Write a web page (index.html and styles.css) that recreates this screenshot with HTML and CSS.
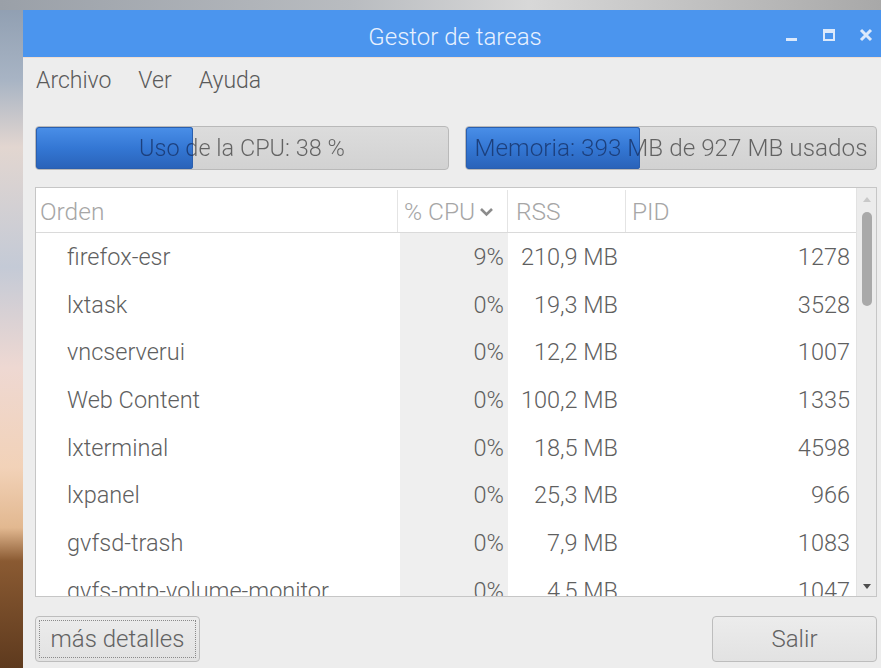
FILE: index.html
```html
<!DOCTYPE html>
<html lang="es">
<head>
<meta charset="utf-8">
<title>Gestor de tareas</title>
<link rel="stylesheet" href="styles.css">
</head>
<body>
<div class="desktop">
  <div class="window">
    <header class="titlebar">
      <span class="title">Gestor de tareas</span>
      <div class="controls">
        <svg class="ctl" width="14" height="14" viewBox="0 0 14 14"><rect x="1" y="10" width="11" height="3" fill="currentColor"/></svg>
        <svg class="ctl" width="14" height="14" viewBox="0 0 14 14"><rect x="2" y="2" width="10" height="10" fill="none" stroke="currentColor" stroke-width="2"/><rect x="2" y="2" width="10" height="3" fill="currentColor"/></svg>
        <svg class="ctl" width="14" height="14" viewBox="0 0 14 14"><path d="M2 2 L12 12 M12 2 L2 12" stroke="currentColor" stroke-width="3"/></svg>
      </div>
    </header>

    <nav class="menubar">
      <span class="menu-item">Archivo</span>
      <span class="menu-item">Ver</span>
      <span class="menu-item">Ayuda</span>
    </nav>

    <div class="meters">
      <div class="meter" style="--p: 38%">
        <div class="meter-fill"></div>
        <span class="meter-label">Uso de la CPU: 38 %</span>
      </div>
      <div class="meter meter-wide" style="--p: 42.4%">
        <div class="meter-fill"></div>
        <span class="meter-label">Memoria: 393 MB de 927 MB usados</span>
      </div>
    </div>

    <div class="proc-list">
      <div class="proc-table">
        <div class="proc-head">
          <div class="hcell">Orden</div>
          <div class="hcell">% CPU
            <svg class="sort" width="15" height="10" viewBox="0 0 15 10"><polyline points="2,2 7.5,7.5 13,2" fill="none" stroke="currentColor" stroke-width="2.6"/></svg>
          </div>
          <div class="hcell">RSS</div>
          <div class="hcell">PID</div>
        </div>
        <div class="proc-body">
          <div class="row"><span class="c-name">firefox-esr</span><span class="c-cpu">9%</span><span class="c-rss">210,9 MB</span><span class="c-pid">1278</span></div>
          <div class="row"><span class="c-name">lxtask</span><span class="c-cpu">0%</span><span class="c-rss">19,3 MB</span><span class="c-pid">3528</span></div>
          <div class="row"><span class="c-name">vncserverui</span><span class="c-cpu">0%</span><span class="c-rss">12,2 MB</span><span class="c-pid">1007</span></div>
          <div class="row"><span class="c-name">Web Content</span><span class="c-cpu">0%</span><span class="c-rss">100,2 MB</span><span class="c-pid">1335</span></div>
          <div class="row"><span class="c-name">lxterminal</span><span class="c-cpu">0%</span><span class="c-rss">18,5 MB</span><span class="c-pid">4598</span></div>
          <div class="row"><span class="c-name">lxpanel</span><span class="c-cpu">0%</span><span class="c-rss">25,3 MB</span><span class="c-pid">966</span></div>
          <div class="row"><span class="c-name">gvfsd-trash</span><span class="c-cpu">0%</span><span class="c-rss">7,9 MB</span><span class="c-pid">1083</span></div>
          <div class="row"><span class="c-name">gvfs-mtp-volume-monitor</span><span class="c-cpu">0%</span><span class="c-rss">4,5 MB</span><span class="c-pid">1047</span></div>
        </div>
      </div>
      <div class="scrollbar">
        <svg class="arrow up" width="10" height="6" viewBox="0 0 10 6"><polygon points="1,6 5,1 9,6" fill="currentColor"/></svg>
        <div class="track"><div class="thumb"></div></div>
        <svg class="arrow down" width="10" height="6" viewBox="0 0 10 6"><polygon points="1,0 9,0 5,5" fill="currentColor"/></svg>
      </div>
    </div>

    <div class="actions">
      <button class="btn btn-focus"><span class="focus-ring">más detalles</span></button>
      <button class="btn btn-quit">Salir</button>
    </div>
  </div>
</div>
</body>
</html>
```

FILE: styles.css
```css
* { box-sizing: border-box; }

html, body {
  margin: 0;
  height: 100%;
  overflow: hidden;
}

body {
  font-family: Roboto, "Liberation Sans", sans-serif;
  font-weight: 300;
  color: #5e5e5e;
}

/* desktop wallpaper peeking around the window */
.desktop {
  height: 100%;
  padding: 10px 0 0 23px;
  background:
    linear-gradient(to right, #9aa0a8 0%, #b9bcc0 40%, #d8d8d8 60%, #a8a8a8 100%) top / 100% 10px no-repeat,
    linear-gradient(to bottom, #8e9db0 0%, #a8b4c4 12%, #e2d6d0 22%, #c4cad6 40%, #eed8d2 55%, #f2d2b8 70%, #e2b890 79%, #8a5a32 84%, #5e3a1e 100%);
}

.window {
  height: 100%;
  background: #ededed;
  display: flex;
  flex-direction: column;
  padding-right: 4px;
}

/* title bar */
.titlebar {
  height: 48px;
  margin-right: -4px;
  background: #4b95ee;
  display: flex;
  align-items: center;
  justify-content: center;
  position: relative;
  border-bottom: 1px solid #f1ddd0;
}

.title {
  color: #e8f1ff;
  font-size: 24px;
  padding-top: 6px;
  padding-left: 6px;
}

.controls {
  position: absolute;
  right: 8px;
  top: 18px;
  display: flex;
  gap: 23px;
  color: #dce9fb;
}

/* menu */
.menubar {
  height: 44px;
  display: flex;
  align-items: center;
  gap: 27px;
  padding-left: 13px;
  font-size: 23px;
  color: #5a5a5a;
}

/* CPU / memory meters */
.meters {
  margin-top: 24px;
  padding-left: 12px;
  display: grid;
  grid-template-columns: 414px 412px;
  gap: 16px;
}

.meter {
  height: 44px;
  border: 1px solid #b9b9b9;
  border-radius: 4px;
  background: linear-gradient(to bottom, #dcdcdc, #d2d2d2);
  display: grid;
  overflow: hidden;
}

.meter-fill,
.meter-label {
  grid-area: 1 / 1;
}

.meter-fill {
  width: var(--p);
  background: linear-gradient(to bottom, #4a8fe8 0%, #3477d4 50%, #2962b8 100%);
  border-radius: 3px;
  box-shadow: inset 0 0 0 1px #2a5faf;
}

.meter-label {
  align-self: center;
  text-align: center;
  font-size: 23.5px;
  line-height: 42px;
  white-space: nowrap;
  background: linear-gradient(to right, #1c3f7c var(--p), #626262 var(--p));
  -webkit-background-clip: text;
  background-clip: text;
  color: transparent;
}

.meter-wide .meter-label {
  font-size: 24.3px;
}

/* process list */
.proc-list {
  margin-top: 17px;
  margin-left: 12px;
  height: 410px;
  border: 1px solid #c6c6c6;
  background: #fff;
  display: flex;
}

.proc-table {
  flex: 1;
  overflow: hidden;
  padding-top: 2px;
}

.proc-head,
.row {
  display: grid;
  grid-template-columns: 362px 110px 118px 1fr;
}

.proc-head {
  height: 43px;
  border-bottom: 1px solid #dadada;
  font-size: 24.5px;
  color: #a6a6a6;
}

.hcell {
  display: flex;
  align-items: center;
  padding-left: 4px;
  border-right: 1px solid #e4e4e4;
  white-space: nowrap;
}

.hcell:last-child { border-right: none; padding-left: 6px; }
.hcell:nth-child(2) { padding-left: 6px; gap: 4px; }
.hcell:nth-child(3) { padding-left: 8px; }

.sort { color: #8c8c8c; margin-top: 2px; flex: none; }

.proc-body {
  font-size: 23.5px;
  color: #5f5f5f;
}

.row {
  height: 47.7px;
  align-items: center;
}

.row > span {
  height: 100%;
  display: flex;
  align-items: center;
  white-space: nowrap;
}

.c-name { padding-left: 31px; }
.c-cpu {
  justify-content: flex-end;
  padding-right: 4px;
  margin-left: 2px;
  background: #efefef;
}
.c-rss { justify-content: flex-end; padding-right: 8px; }
.c-pid { justify-content: flex-end; padding-right: 6px; }

.scrollbar {
  width: 20px;
  background: #ececec;
  border-left: 1px solid #e2e2e2;
  display: flex;
  flex-direction: column;
  align-items: center;
  padding: 8px 0 6px;
}

.arrow.up { color: #c8c8c8; }
.arrow.down { color: #4e4e4e; }

.track {
  flex: 1;
  width: 100%;
  display: flex;
  justify-content: center;
  padding-top: 10px;
}

.thumb {
  width: 10px;
  height: 94px;
  border-radius: 5px;
  background: #a9a9a9;
}

/* bottom buttons */
.actions {
  margin-top: 19px;
  margin-left: 12px;
  display: flex;
  justify-content: space-between;
}

.btn {
  height: 46px;
  font-family: inherit;
  font-weight: 300;
  font-size: 24px;
  color: #626262;
  background: linear-gradient(to bottom, #ececec, #e2e2e2);
  border: 1px solid #bdbdbd;
  border-radius: 4px;
  padding: 0;
}

.btn-focus {
  width: 165px;
  padding: 3px;
}

.focus-ring {
  display: flex;
  align-items: center;
  justify-content: center;
  height: 100%;
  border: 1px dotted #8a8a8a;
}

.btn-quit {
  width: 165px;
}
```
